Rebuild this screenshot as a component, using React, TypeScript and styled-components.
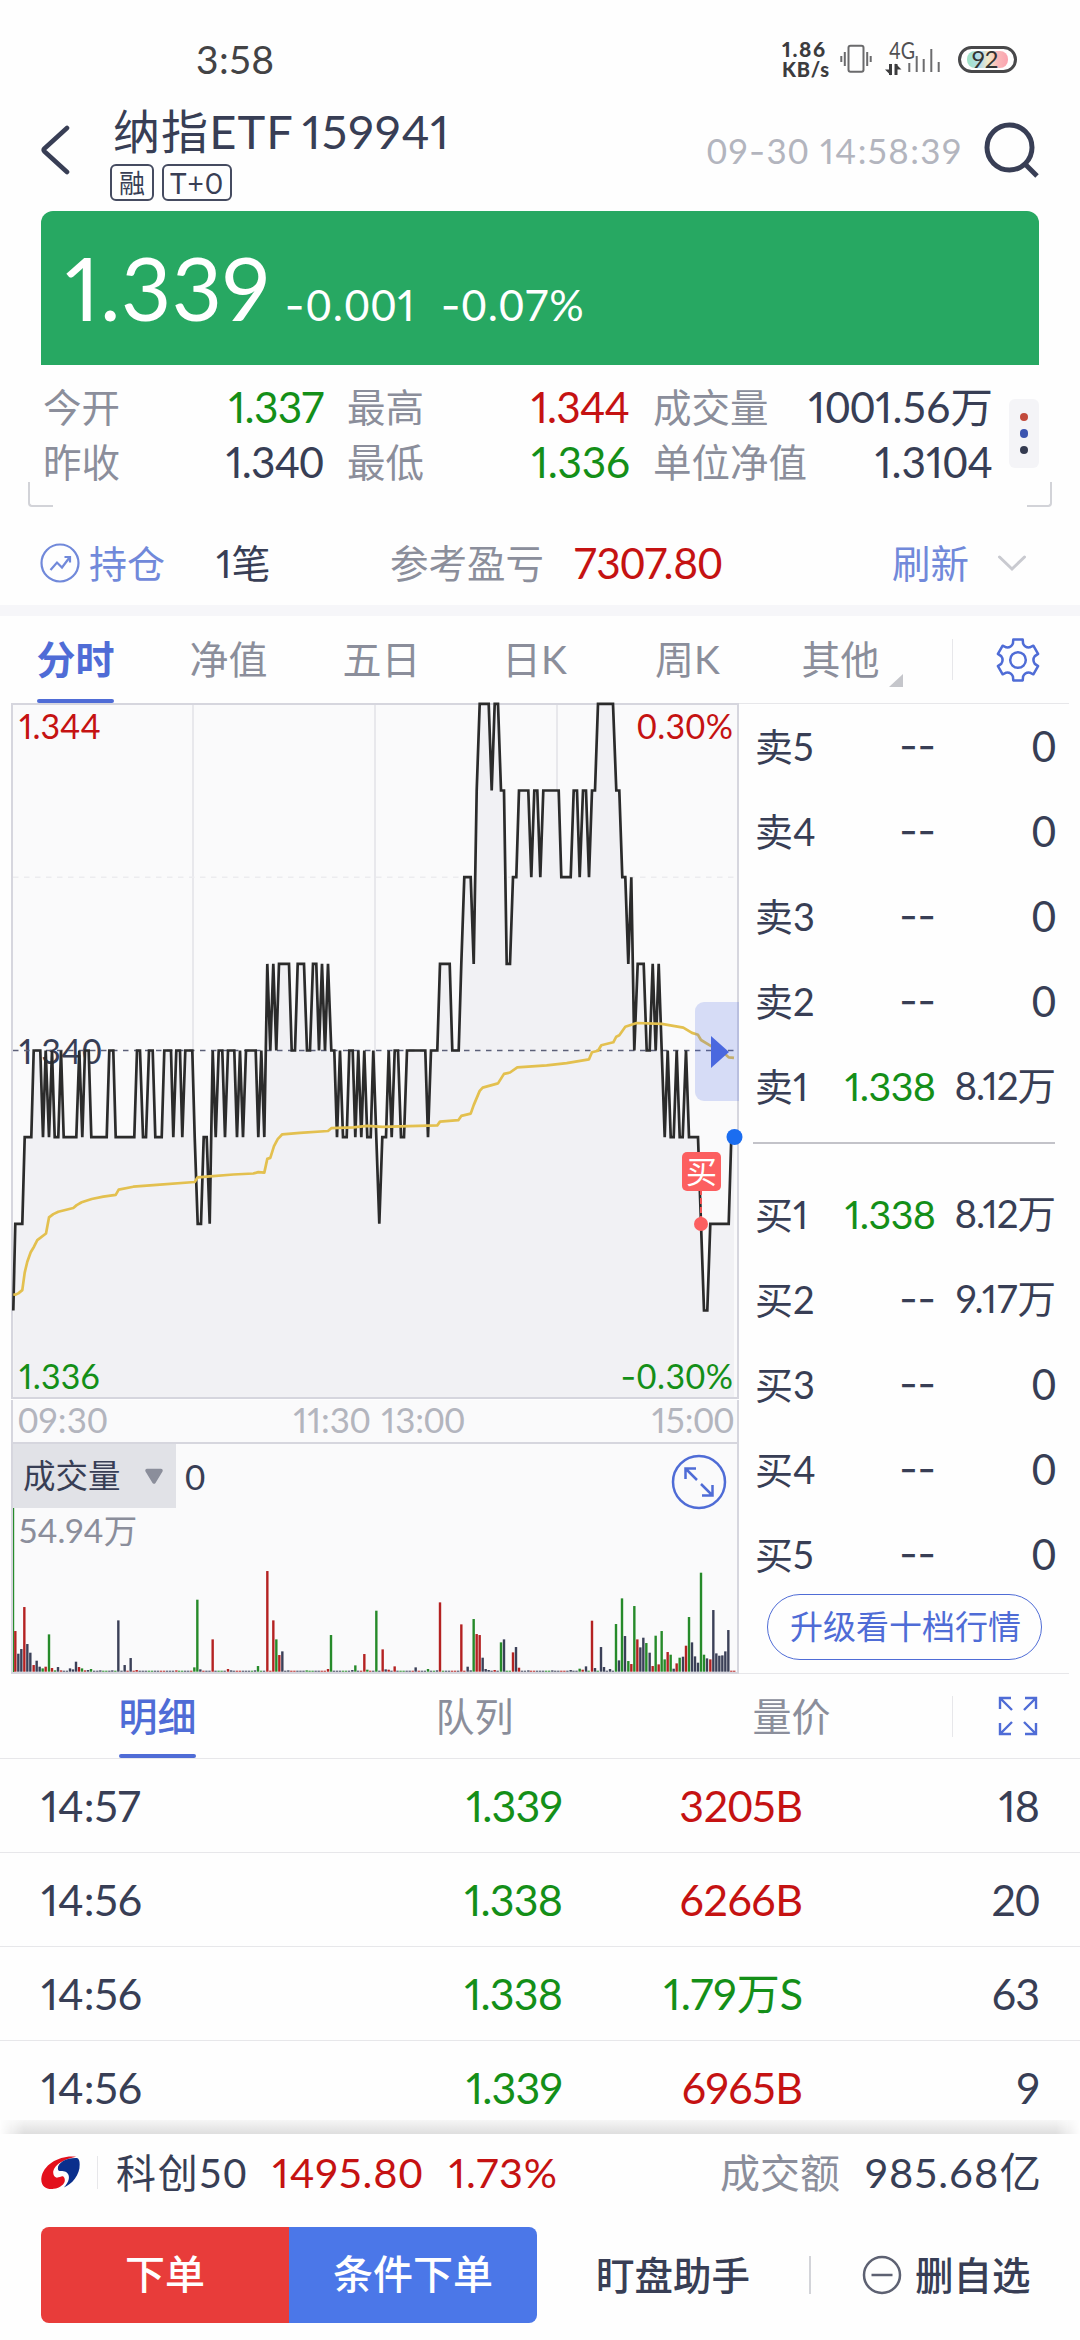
import React from "react";
import styled, { createGlobalStyle, css } from "styled-components";

const c = {
  ink: "#383e55",
  grey: "#8b8e9b",
  pale: "#b3b5be",
  green: "#148f18",
  red: "#c51212",
  blue: "#4f6cd6",
  softBlue: "#7189da",
  line: "#e7e7ea",
  frame: "#d6d6de",
  chartBg: "#fafafb",
};

const Global = createGlobalStyle`
  *, *::before, *::after { box-sizing: border-box; }
  body { margin: 0; background: #fefefe; }
`;

const Screen = styled.main`
  width: 1080px;
  height: 2340px;
  overflow: hidden;
  display: flex;
  flex-direction: column;
  background: #fefefe;
  color: ${c.ink};
  font-family: Lato, "Noto Sans CJK SC", sans-serif;
  font-variant-numeric: proportional-nums;
  line-height: 1;
  white-space: nowrap;
`;

/* ---------- text ---------- */

const Figure = styled.span<{ $size: number; $color?: string; $ls?: number; $weight?: number }>`
  font-size: ${(p) => p.$size}px;
  color: ${(p) => p.$color ?? c.ink};
  letter-spacing: ${(p) => p.$ls ?? 0}px;
  margin-right: ${(p) => -(p.$ls ?? 0)}px;
  font-weight: ${(p) => p.$weight ?? 400};
`;

const Zero = styled.span`
  font-variant-numeric: tabular-nums;
`;

const Minus = styled.span`
  font-family: Inter, sans-serif;
  line-height: 0;
`;

const Dashes = styled.span`
  font-family: Inter, sans-serif;
  font-size: 40px;
`;

type NumProps = { value: string; size: number; color?: string; ls?: number; weight?: number };

/* Proportional figures, with the narrow tabular zero and a wide minus. */
function Num({ value, size, color, ls, weight }: NumProps) {
  return (
    <Figure $size={size} $color={color} $ls={ls} $weight={weight}>
      {value
        .split(/(0+|-)/)
        .filter(Boolean)
        .map((part, i) => {
          if (part === "-") return <Minus key={i}>-</Minus>;
          if (part[0] === "0") return <Zero key={i}>{part}</Zero>;
          return part;
        })}
    </Figure>
  );
}

/* ---------- status bar ---------- */

const StatusBar = styled.header`
  height: 100px;
  padding: 18px 63px 0 196px;
  display: flex;
  align-items: center;
`;

const StatusIcons = styled.div`
  margin-left: auto;
  display: flex;
  align-items: center;
`;

const NetSpeed = styled.div`
  width: 58px;
  display: flex;
  flex-direction: column;
  font-size: 20px;
  line-height: 20px;
  font-weight: 900;
  letter-spacing: 0.8px;
  color: #3c3c3e;
`;

const NetValue = styled.span`
  font-size: 21px;
  letter-spacing: 1.6px;
`;

const Battery = styled.div`
  width: 59px;
  height: 27px;
  border: 3px solid #48484a;
  border-radius: 14px;
  padding: 2px 6px;
  display: flex;
`;

const Charge = styled.div`
  flex: 1;
  display: flex;
  align-items: center;
  justify-content: center;
  border-radius: 8px;
  background: linear-gradient(90deg, #9fe3c4 0%, #b5dcec 30%, #f3e9c6 52%, #f9b9b9 75%, #fba3b0 100%);
  font-size: 24px;
  color: #333;
  text-indent: -5px;
`;

const CellIcon = styled.svg`
  margin: 0 16px 0 13px;
  overflow: visible;
`;

function SignalIcon() {
  return (
    <CellIcon width="57" height="36" viewBox="0 0 57 36">
      <text x="4" y="17.500" fontSize="23" fontFamily="Lato, sans-serif" fill="#505052" textLength="26" lengthAdjust="spacingAndGlyphs">
        4G
      </text>
      <path d="M5.500 23v11M11 23v11" stroke="#3c3c3e" strokeWidth="3" />
      <path d="M6 34.500 0 28.500h6zM10.500 22.500l6 6h-6z" fill="#3c3c3e" />
      <path d="M24.300 22v9M31.700 15v16M38.700 18v13M46.300 8v23M53.700 21v10" stroke="#6c6c6e" strokeWidth="2" />
    </CellIcon>
  );
}

function VibrateIcon() {
  return (
    <svg width="32" height="30" viewBox="0 0 32 30" fill="none" stroke="#6a6a6c" strokeWidth="2">
      <rect x="8.500" y="1.800" width="15" height="26" rx="2" />
      <path d="M4.800 8v14M1.300 12v6M27.200 8v14M30.700 12v6" />
    </svg>
  );
}

/* ---------- title bar ---------- */

const TitleBar = styled.div`
  height: 111px;
  padding: 0 41px;
  display: grid;
  grid-template-columns: 69px 1fr auto 78px;
`;

const TitleSide = styled.div<{ $end?: boolean }>`
  height: 100px;
  display: flex;
  align-items: center;
  justify-content: ${(p) => (p.$end ? "flex-end" : "flex-start")};
`;

const TitleBlock = styled.div`
  padding-top: 8px;
  display: flex;
  flex-direction: column;
  gap: 8px;
`;

const Title = styled.h1`
  margin: 0;
  height: 48px;
  display: flex;
  align-items: center;
  font-size: 47px;
  line-height: 48px;
  font-weight: 400;
  letter-spacing: 1.1px;
  word-spacing: -4px;
  padding: 0 0 2px 3px;
`;

const Tags = styled.div`
  display: flex;
  gap: 8px;
`;

const Tag = styled.span<{ $wide?: boolean }>`
  width: ${(p) => (p.$wide ? 70 : 44)}px;
  height: 37px;
  border: 2px solid #454b60;
  border-radius: 6px;
  display: flex;
  align-items: center;
  justify-content: center;
  font-size: ${(p) => (p.$wide ? 28 : 26)}px;
  letter-spacing: ${(p) => (p.$wide ? 1 : 0)}px;
`;

/* ---------- price banner ---------- */

const Banner = styled.section`
  height: 154px;
  margin: 0 41px;
  padding: 33px 0 0 24px;
  display: flex;
  align-items: baseline;
  background: #27a862;
  border-radius: 12px 12px 0 0;
`;

const Change = styled.div`
  margin-left: 15px;
  display: flex;
  gap: 26px;
`;

/* ---------- statistics ---------- */

const Stats = styled.section`
  position: relative;
  height: 145px;
  padding: 15px 0 0 43px;
  display: flex;
  align-items: flex-start;
`;

const StatGrid = styled.div`
  display: grid;
  grid-template-columns: 281px 283px 340px;
  grid-auto-rows: 55px;
  column-gap: 23px;
`;

const Stat = styled.div`
  display: flex;
  align-items: center;
  justify-content: space-between;
`;

const Label = styled.span<{ $size?: number; $color?: string }>`
  font-size: ${(p) => p.$size ?? 38.5}px;
  color: ${(p) => p.$color ?? c.grey};
`;

const MoreDots = styled.div`
  width: 30px;
  height: 69px;
  margin: 19px 0 0 16px;
  border-radius: 6px;
  background: #f4f4f7;
  display: flex;
  flex-direction: column;
  align-items: center;
  justify-content: center;
  gap: 8px;
`;

const Dot = styled.i<{ $color: string }>`
  width: 8.5px;
  height: 8.5px;
  border-radius: 50%;
  background: ${(p) => p.$color};
`;

const Corner = styled.i<{ $right?: boolean }>`
  position: absolute;
  bottom: 3px;
  ${(p) => (p.$right ? "right: 28px" : "left: 28px")};
  width: 25px;
  height: 25px;
  border-bottom: 2.5px solid #d2d3d8;
  ${(p) =>
    p.$right
      ? css`border-right: 2.5px solid #d2d3d8; border-bottom-right-radius: 4px;`
      : css`border-left: 2.5px solid #d2d3d8; border-bottom-left-radius: 4px;`}
`;

const Position = styled.section`
  height: 95px;
  padding: 11px 0 0 40px;
  display: grid;
  grid-template-columns: 49px 127px 174px 184px 318px auto;
  align-items: center;
`;

const Refresh = styled.div`
  display: flex;
  align-items: center;
  gap: 28px;
`;

const Band = styled.div`
  height: 11px;
  background: #f6f6f9;
`;

/* ---------- tabs ---------- */

const Tabs = styled.nav<{ $col: number; $height: number; $ruled?: boolean }>`
  height: ${(p) => p.$height}px;
  margin-left: -1px;
  display: grid;
  grid-auto-flow: column;
  grid-auto-columns: ${(p) => p.$col}px;
  ${(p) => p.$ruled && css`border-bottom: 1px solid ${c.line};`}
`;

const Tab = styled.button<{ $active?: boolean; $bold?: boolean }>`
  position: relative;
  border: 0;
  padding: 0;
  background: none;
  font: inherit;
  font-size: 39px;
  font-weight: ${(p) => (p.$bold ? 700 : p.$active ? 500 : 400)};
  color: ${(p) => (p.$active ? c.blue : c.grey)};
  ${(p) =>
    p.$active &&
    css`
      &::after {
        content: "";
        position: absolute;
        left: calc(50% - 39px);
        bottom: 0;
        width: 77px;
        height: 4px;
        border-radius: 2px;
        background: ${c.blue};
      }
    `}
`;

const TabFold = styled.i`
  position: absolute;
  right: 14px;
  bottom: 16px;
  border-left: 14px solid transparent;
  border-bottom: 13px solid #c5c6cb;
`;

const TabTool = styled.div<{ $shift: number }>`
  width: 130px;
  height: 41px;
  margin-left: ${(p) => p.$shift}px;
  align-self: center;
  border-left: 1.5px solid ${c.line};
  display: flex;
  align-items: center;
  justify-content: center;
`;

function GearIcon() {
  const pt = (r: number, a: number) => {
    const t = (a * Math.PI) / 180;
    return `${(23 + r * Math.cos(t)).toFixed(2)} ${(23 + r * Math.sin(t)).toFixed(2)}`;
  };
  const d = [0, 1, 2, 3, 4, 5]
    .map((k) => {
      const a = -90 + k * 60;
      return `${k ? "L" : "M"}${pt(21, a - 13)} L${pt(21, a + 13)} L${pt(17.3, a + 17)} Q${pt(14, a + 30)} ${pt(17.3, a + 43)}`;
    })
    .join(" ");
  return (
    <svg width="46" height="46" viewBox="0 0 46 46" fill="none" stroke={c.blue} strokeWidth="2.500" strokeLinejoin="round">
      <path d={d + "Z"} />
      <circle cx="23" cy="23" r="7.800" />
    </svg>
  );
}

/* ---------- market panel ---------- */

const Market = styled.section`
  height: 971px;
  margin: 0 11px;
  display: grid;
  grid-template-columns: 728px 330px;
`;

const ChartColumn = styled.div`
  display: flex;
  flex-direction: column;
`;

const PriceChart = styled.div`
  position: relative;
  height: 696px;
  border: 2px solid ${c.frame};
  background: ${c.chartBg};
`;

const ChartSvg = styled.svg`
  position: absolute;
  left: -2px;
  top: -2px;
  overflow: visible;
`;

const AxisLabel = styled.div<{ $top: number; $right?: boolean }>`
  position: absolute;
  top: ${(p) => p.$top}px;
  ${(p) => (p.$right ? "right: 4px" : "left: 6px")};
`;

const BuyBadge = styled.div`
  position: absolute;
  left: 669px;
  top: 447px;
  width: 39px;
  height: 39px;
  border-radius: 5px;
  background: #fc5f60;
  color: #fff;
  font-size: 31px;
  display: flex;
  align-items: center;
  justify-content: center;
`;

const Drawer = styled.button`
  position: absolute;
  right: -2px;
  top: 297px;
  width: 44px;
  height: 99px;
  border: 0;
  border-radius: 9px 0 0 9px;
  padding: 0 0 0 16px;
  background: rgba(79, 108, 226, 0.21);
  display: flex;
  align-items: center;
`;

const TimeAxis = styled.div`
  height: 42px;
  margin-top: 1px;
  padding: 0 3px 3px 5px;
  border: solid ${c.frame};
  border-width: 0 2px;
  background: ${c.chartBg};
  display: grid;
  grid-template-columns: 1fr auto 1fr;
  align-items: center;
`;

const Noon = styled.div`
  display: flex;
  gap: 11px;
  padding-left: 6px;
`;

const AxisEnd = styled.div`
  text-align: right;
`;

const VolumeChart = styled.div`
  position: relative;
  height: 232px;
  border: 2px solid ${c.frame};
  background: ${c.chartBg};
`;

const VolumeHead = styled.div`
  display: flex;
  align-items: center;
  gap: 9px;
`;

const IndicatorPicker = styled.button`
  width: 163px;
  height: 64px;
  border: 0;
  padding: 0 12px 0 10px;
  background: #e1e2e7;
  display: flex;
  align-items: center;
  justify-content: space-between;
  font: inherit;
  font-size: 32.5px;
  color: ${c.ink};
`;

const VolumeMax = styled.div`
  padding: 6px 0 0 6px;
`;

const ZoomButton = styled.div`
  position: absolute;
  right: 10px;
  top: 10px;
  width: 56px;
  height: 56px;
`;

/* ---------- order book ---------- */

const OrderBook = styled.div`
  border: solid ${c.line};
  border-width: 1.5px 0;
  padding: 0 16px;
`;

const Quote = styled.div<{ $bid?: boolean }>`
  height: 85px;
  padding-bottom: ${(p) => (p.$bid ? 4 : 2)}px;
  display: grid;
  grid-template-columns: 87px 94px 120px;
  align-items: center;
`;

const QuoteCell = styled.div`
  text-align: right;
`;

const Spread = styled.div`
  height: 44px;
  padding-top: 13px;
  &::before {
    content: "";
    display: block;
    margin: 0 -2px;
    border-top: 2px solid #c3c3c9;
  }
`;

const Upgrade = styled.button`
  width: 275px;
  height: 66px;
  margin: -4px 0 0 12px;
  border: 1.5px solid ${c.blue};
  border-radius: 33px;
  padding: 0 0 2px 2px;
  background: none;
  font: inherit;
  font-size: 33px;
  color: ${c.blue};
`;

/* ---------- trades ---------- */

const Trade = styled.div`
  height: 94px;
  padding: 0 0 1px 41px;
  border-bottom: 1.5px solid ${c.line};
  display: grid;
  grid-template-columns: 281px 241px 240px 237px;
  align-items: center;
`;

/* ---------- bottom bar ---------- */

const BottomBar = styled.footer`
  position: relative;
  height: 206px;
  margin-top: -1px;
  background: #fefefe;
  &::before {
    content: "";
    position: absolute;
    left: 0;
    right: 0;
    top: -14px;
    height: 14px;
    background: linear-gradient(#f6f6f6, #dedede);
    mask-image: linear-gradient(90deg, transparent 0, #000 24px, #000 1056px, transparent 1080px);
  }
`;

const Ticker = styled.div`
  height: 78px;
  padding: 0 39px 1px 41px;
  display: flex;
  align-items: center;
`;

const Rule = styled.i<{ $h: number; $color?: string; $w?: number }>`
  width: ${(p) => p.$w ?? 1}px;
  height: ${(p) => p.$h}px;
  background: ${(p) => p.$color ?? c.line};
`;

const TickerRule = styled.div`
  margin-left: 17px;
  display: flex;
`;

const IndexInfo = styled.div`
  margin-left: 18px;
  display: flex;
  align-items: center;
  gap: 26px;
`;

const Turnover = styled.div`
  margin-left: auto;
  display: flex;
  align-items: center;
  gap: 25px;
`;

const Actions = styled.div`
  padding: 15px 0 0 41px;
  display: flex;
  align-items: center;
`;

const TradeButton = styled.button<{ $blue?: boolean }>`
  width: 248px;
  height: 96px;
  border: 0;
  border-radius: ${(p) => (p.$blue ? "0 8px 8px 0" : "8px 0 0 8px")};
  padding: 0 0 2px;
  background: ${(p) => (p.$blue ? "#4b77e8" : "#e83c3a")};
  color: #fff;
  font: inherit;
  font-size: 40px;
  font-weight: 500;
`;

const TextAction = styled.button`
  border: 0;
  padding: 0;
  background: none;
  display: flex;
  align-items: center;
  gap: 13px;
  font: inherit;
  font-size: 38.5px;
  font-weight: 500;
  color: ${c.ink};
`;

const Helper = styled.div`
  margin-left: 59px;
`;

const Split = styled.div`
  margin: 0 51px 0 59px;
  display: flex;
`;

/* ---------- chart data ---------- */

/* Horizontal positions are in thirds of a pixel; levels are ticks from 1.340. */
const price: [number, number][] = [
  [40, -3], [46, -2], [67, -2], [74, -1], [94, -1], [101, 0], [121, 0], [129, -1], [137, 0], [147, -1], [156, 0],
  [164, -1], [175, -1], [183, 0], [191, -1], [229, -1], [238, 0], [247, -1], [255, 0], [266, 0], [274, -1], [320, -1],
  [328, 0], [340, 0], [347, -1], [403, -1], [411, 0], [420, 0], [429, -1], [438, -1], [447, 0], [458, 0], [466, -1],
  [485, -1], [493, 0], [513, 0], [520, -1], [529, 0], [540, 0], [547, -1], [556, 0], [577, 0], [584, -1], [593, -2],
  [603, -2], [611, -1], [620, -1], [629, -2], [638, 0], [647, -1], [656, 0], [667, 0], [675, -1], [684, 0], [703, 0],
  [711, -1], [720, 0], [729, -1], [738, 0], [767, 0], [775, -1], [784, 0], [793, -1], [802, 1], [811, 0], [820, 1],
  [829, 0], [837, 1], [867, 1], [875, 0], [885, 0], [893, 1], [912, 1], [921, 0], [930, 0], [939, 1], [949, 1],
  [957, 0], [966, 1], [975, 0], [984, 1], [994, 0], [1003, 0], [1011, -1], [1020, 0], [1029, -1], [1040, -1],
  [1048, 0], [1058, 0], [1066, -1], [1075, 0], [1084, -1], [1093, 0], [1102, -1], [1112, -1], [1120, 0], [1129, -1],
  [1138, -2], [1147, -1], [1158, -1], [1166, 0], [1175, -1], [1184, 0], [1194, 0], [1203, -1], [1212, -1], [1221, 0],
  [1276, 0], [1284, -1], [1293, 0], [1312, 0], [1320, 1], [1349, 1], [1357, 0], [1376, 0], [1384, 1], [1393, 2],
  [1412, 2], [1421, 1], [1430, 3], [1439, 4], [1466, 4], [1475, 3], [1484, 4], [1494, 4], [1503, 3], [1512, 3],
  [1520, 1], [1530, 1], [1539, 2], [1549, 2], [1557, 3], [1585, 3], [1594, 2], [1603, 3], [1612, 3], [1621, 2],
  [1630, 3], [1676, 3], [1684, 2], [1712, 2], [1721, 3], [1731, 3], [1739, 2], [1749, 3], [1758, 3], [1767, 2],
  [1776, 3], [1785, 3], [1794, 4], [1839, 4], [1849, 3], [1858, 3], [1867, 2], [1876, 2], [1885, 1], [1894, 2],
  [1903, 0], [1913, 1], [1931, 1], [1940, 0], [1949, 0], [1958, 1], [1967, 0], [1976, 1], [1985, 0], [1994, -1],
  [2003, 0], [2012, -1], [2021, -1], [2030, 0], [2039, -1], [2048, -1], [2058, 0], [2067, -1], [2094, -1],
  [2103, -2], [2112, -3], [2122, -3], [2131, -2], [2186, -2], [2194, -1], [2202, -1],
];

const average: [number, number][] = [
  [40, 1281], [46, 1282], [55, 1279], [67, 1272], [74, 1235], [82, 1212], [92, 1192], [102, 1180], [112, 1166],
  [138, 1152], [147, 1118], [160, 1111], [175, 1106], [220, 1098], [230, 1092], [245, 1086], [275, 1079], [310, 1074],
  [347, 1070], [356, 1059], [400, 1053], [470, 1049], [584, 1043], [593, 1033], [630, 1031], [700, 1027], [760, 1025],
  [775, 1022], [793, 1023], [802, 994], [811, 992], [822, 967], [833, 952], [847, 942], [900, 939], [984, 935],
  [994, 929], [1060, 927], [1102, 924], [1147, 926], [1200, 925], [1312, 923], [1320, 915], [1375, 912], [1384, 903],
  [1412, 898], [1421, 880], [1439, 850], [1448, 843], [1494, 834], [1512, 814], [1530, 811], [1552, 800], [1640, 796],
  [1700, 791], [1767, 783], [1776, 768], [1794, 765], [1804, 753], [1840, 747], [1849, 735], [1858, 732], [1876, 714],
  [1910, 706], [1985, 708], [2050, 716], [2076, 727], [2094, 731], [2103, 742], [2131, 754], [2150, 762], [2170, 768],
  [2186, 779], [2202, 780],
];

const volume = `46r122 55d54 64d68 73r194 82d83 91d57 101r20 110d33 119d15 128g10 137r15 147g112 156r11 165g4 174d14
183r4 210d10 219d7 228d30 237r14 246g10 255r4 264d5 273g8 292d3 301d4 337d4 346g3 355d154 374d20 392d41 410r5 529r4
583g13 592g216 601d7 638r97 684r8 693d4 765d4 774g17 802r302 811r3 820r154 829g97 838r50 847d61 865d4 920g4 984r8
993g110 1057d5 1066g19 1093r53 1102g6 1129g183 1138d3 1148r67 1157d7 1166r6 1184r16 1247d13 1284g8 1311d4 1320r208
1384r142 1393r3 1403d15 1412d4 1421g158 1430r113 1439r110 1448d42 1457d8 1466d5 1484r5 1503g88 1512d97 1539r58
1548d74 1557r12 1585d4 1657d4 1712d5 1739g9 1748r6 1758d16 1776r153 1785d11 1803d74 1812d14 1830d8 1848g143 1857d34
1866g220 1875d107 1885g32 1894r23 1903g197 1912r97 1921d73 1930d102 1939g86 1949d57 1958r17 1967g108 1976r22
1985g122 1994g37 2003r59 2012g51 2021d9 2030r25 2039g42 2049d45 2058r78 2067g164 2076d88 2085d46 2094d27 2103g297
2112g51 2121d40 2131r37 2140d185 2149d55 2158d48 2167d49 2176d61 2185d125 2194r3`
  .split(/\s+/)
  .map((s) => {
    const m = /(\d+)([rgd])(\d+)/.exec(s)!;
    return { x: +m[1], tone: m[2], h: +m[3] };
  });

const tones: Record<string, string> = { r: "#b42222", g: "#268a2a", d: "#3b4058" };

/* Minutes with almost no turnover still show a sliver on the baseline. */
const quiet = Array.from({ length: 238 }, (_, i) => 46 + i * 9.1)
  .filter((x) => !volume.some((v) => Math.abs(v.x - x) < 5))
  .map((x, i) => ({ x, tone: "ddgdrdgdr"[(i * 5) % 9], h: 3 }));

const gx = (x: number) => x / 3 - 11;
const level = (n: number) => 347.5 - n * 86.65;
const pricePoints = price.map(([x, n]) => `${gx(x).toFixed(1)},${level(n).toFixed(1)}`).join(" ");
const averagePoints = average.map(([x, y]) => `${gx(x).toFixed(1)},${(y / 2.119 - 13.2).toFixed(1)}`).join(" ");

function PriceLines() {
  return (
    <ChartSvg width="728" height="696" viewBox="0 0 728 696" fill="none">
      <path d="M182 2V694M364 2V694M546 2V694" stroke="#e6e6ea" strokeWidth="1.800" />
      <path d="M2 174.300H724" stroke="#ececef" strokeWidth="1.500" strokeDasharray="5.500 5.500" />
      <polygon points={`2.300,694 ${pricePoints} 723,694`} fill="#f1f1f4" />
      <path d="M2 347.500H724" stroke="#5c6078" strokeWidth="1.500" strokeDasharray="5.500 5.500" />
      <polyline points={pricePoints} stroke="#2b2b2b" strokeWidth="2.700" />
      <polyline points={averagePoints} stroke="#e3c04f" strokeWidth="2.700" strokeLinejoin="round" />
      <path d="M690 486V521" stroke="#e55" strokeWidth="2" strokeDasharray="6 3" />
      <circle cx="690" cy="521" r="7" fill="#fc5f60" />
      <circle cx="723.500" cy="434" r="8" fill="#1b6df0" />
    </ChartSvg>
  );
}

function VolumeBars() {
  return (
    <ChartSvg width="728" height="232" viewBox="0 0 728 232">
      <rect x="2" y="66" width="1.200" height="164" fill="#268a2a" />
      {[...quiet, ...volume].map((v) => (
        <rect key={v.x} x={gx(v.x) - 1.2} y={229.7 - v.h / 3} width="2.400" height={v.h / 3} fill={tones[v.tone]} />
      ))}
    </ChartSvg>
  );
}

/* ---------- content ---------- */

const stats = [
  { label: "今开", value: "1.337", color: c.green, ls: -0.7 },
  { label: "最高", value: "1.344", color: c.red, ls: -0.8 },
  { label: "成交量", value: "1001.56万", color: c.ink, ls: 0.3 },
  { label: "昨收", value: "1.340", color: c.ink, ls: -0.8 },
  { label: "最低", value: "1.336", color: c.green, ls: -0.3 },
  { label: "单位净值", value: "1.3104", color: c.ink, ls: 0 },
];

const asks = [
  ["卖5", "", "0"],
  ["卖4", "", "0"],
  ["卖3", "", "0"],
  ["卖2", "", "0"],
  ["卖1", "1.338", "8.12万"],
];

const bids = [
  ["买1", "1.338", "8.12万"],
  ["买2", "", "9.17万"],
  ["买3", "", "0"],
  ["买4", "", "0"],
  ["买5", "", "0"],
];

const trades = [
  { time: "14:57", price: "1.339", vol: "3205B", buy: true, count: "18" },
  { time: "14:56", price: "1.338", vol: "6266B", buy: true, count: "20" },
  { time: "14:56", price: "1.338", vol: "1.79万S", buy: false, count: "63" },
  { time: "14:56", price: "1.339", vol: "6965B", buy: true, count: "9" },
];

function QuoteRow({ row: [name, quote, amount], bid }: { row: string[]; bid?: boolean }) {
  return (
    <Quote $bid={bid}>
      <Label $size={38} $color={c.ink}>
        {name}
      </Label>
      <QuoteCell>{quote ? <Num value={quote} size={39.5} color={c.green} ls={-0.6} /> : <Dashes>--</Dashes>}</QuoteCell>
      <QuoteCell>
        <Num value={amount} size={amount === "0" ? 42 : 38.5} ls={amount === "0" ? 0 : amount[0] === "9" ? 0 : -1} />
      </QuoteCell>
    </Quote>
  );
}

export default function App() {
  return (
    <Screen>
      <Global />
      <StatusBar>
        <Num value="3:58" size={39} color="#434345" ls={0.6} />
        <StatusIcons>
          <NetSpeed>
            <NetValue>1.86</NetValue>
            <span>KB/s</span>
          </NetSpeed>
          <VibrateIcon />
          <SignalIcon />
          <Battery>
            <Charge>92</Charge>
          </Battery>
        </StatusIcons>
      </StatusBar>

      <TitleBar>
        <TitleSide>
          <svg width="30" height="50" viewBox="0 0 30 50" fill="none" stroke={c.ink} strokeWidth="4.600" strokeLinecap="round" strokeLinejoin="round">
            <path d="M26 3 3.500 23.500Q2 25 3.500 26.500L26 47" />
          </svg>
        </TitleSide>
        <TitleBlock>
          <Title>纳指ETF 159941</Title>
          <Tags>
            <Tag>融</Tag>
            <Tag $wide>T+0</Tag>
          </Tags>
        </TitleBlock>
        <TitleSide>
          <Num value="09-30 14:58:39" size={35} color={c.pale} ls={1.4} />
        </TitleSide>
        <TitleSide $end>
          <svg width="56" height="56" viewBox="0 0 56 56" fill="none" stroke={c.ink} strokeWidth="5">
            <circle cx="26.500" cy="25.500" r="22.500" />
            <path d="M42 42 54 54" />
          </svg>
        </TitleSide>
      </TitleBar>

      <Banner>
        <Num value="1.339" size={87} color="#fff" ls={0.5} />
        <Change>
          <Num value="-0.001" size={43} color="#fff" ls={1.6} />
          <Num value="-0.07%" size={43} color="#fff" ls={1.2} />
        </Change>
      </Banner>

      <Stats>
        <StatGrid>
          {stats.map((s) => (
            <Stat key={s.label}>
              <Label>{s.label}</Label>
              <Num value={s.value} size={42.5} color={s.color} ls={s.ls} />
            </Stat>
          ))}
        </StatGrid>
        <MoreDots>
          <Dot $color="#c24a3c" />
          <Dot $color="#3c55b0" />
          <Dot $color="#343a50" />
        </MoreDots>
        <Corner />
        <Corner $right />
      </Stats>

      <Position>
        <svg width="40" height="40" viewBox="0 0 40 40" fill="none" stroke={c.softBlue} strokeWidth="2.200">
          <circle cx="20" cy="20" r="18.500" />
          <path d="M10.500 27 17 19.500 22 24.500 29.500 14.500M24.500 14h5.500v5.500" />
        </svg>
        <Label $size={38} $color={c.softBlue}>
          持仓
        </Label>
        <Label $size={39} $color={c.ink}>
          1笔
        </Label>
        <Label>参考盈亏</Label>
        <Num value="7307.80" size={42.5} color={c.red} ls={-0.4} />
        <Refresh>
          <Label $color={c.softBlue}>刷新</Label>
          <svg width="30" height="18" viewBox="0 0 30 18" fill="none" stroke="#c9cad0" strokeWidth="3" strokeLinecap="round">
            <path d="M2.500 3 15 15 27.500 3" />
          </svg>
        </Refresh>
      </Position>
      <Band />

      <Tabs $col={153} $height={87}>
        <Tab $active $bold>
          分时
        </Tab>
        <Tab>净值</Tab>
        <Tab>五日</Tab>
        <Tab>日K</Tab>
        <Tab>周K</Tab>
        <Tab>
          其他
          <TabFold />
        </Tab>
        <TabTool $shift={35}>
          <GearIcon />
        </TabTool>
      </Tabs>

      <Market>
        <ChartColumn>
          <PriceChart>
            <AxisLabel $top={329}>
              <Num value="1.340" size={34} ls={0.4} />
            </AxisLabel>
            <PriceLines />
            <AxisLabel $top={4}>
              <Num value="1.344" size={34} color={c.red} />
            </AxisLabel>
            <AxisLabel $top={4} $right>
              <Num value="0.30%" size={34} color={c.red} ls={0.4} />
            </AxisLabel>
            <AxisLabel $top={654}>
              <Num value="1.336" size={34} color={c.green} ls={0.2} />
            </AxisLabel>
            <AxisLabel $top={654} $right>
              <Num value="-0.30%" size={34} color={c.green} ls={0.5} />
            </AxisLabel>
            <BuyBadge>买</BuyBadge>
            <Drawer>
              <svg width="18" height="32" viewBox="0 0 18 32">
                <path d="M0 0 18 16 0 32Z" fill="#4a68df" />
              </svg>
            </Drawer>
          </PriceChart>
          <TimeAxis>
            <Num value="09:30" size={35} color={c.pale} ls={0.2} />
            <Noon>
              <Num value="11:30" size={35} color={c.pale} />
              <Num value="13:00" size={35} color={c.pale} />
            </Noon>
            <AxisEnd>
              <Num value="15:00" size={35} color={c.pale} />
            </AxisEnd>
          </TimeAxis>
          <VolumeChart>
            <VolumeBars />
            <VolumeHead>
              <IndicatorPicker>
                成交量
                <svg width="20" height="17" viewBox="0 0 20 17">
                  <path d="M3 2.500H17L10 14Z" fill={c.grey} stroke={c.grey} strokeWidth="3.500" strokeLinejoin="round" />
                </svg>
              </IndicatorPicker>
              <Num value="0" size={35} />
            </VolumeHead>
            <VolumeMax>
              <Num value="54.94万" size={33.5} color={c.grey} ls={0.2} />
            </VolumeMax>
            <ZoomButton>
              <svg width="56" height="56" viewBox="0 0 56 56" fill="none" stroke={c.blue} strokeWidth="2.500">
                <circle cx="28" cy="28" r="26" />
                <path d="M26 26 14.500 14.500M14.500 25V14.500H25M30 30 41.500 41.500M31 41.500H41.500V31" />
              </svg>
            </ZoomButton>
          </VolumeChart>
        </ChartColumn>

        <OrderBook>
          {asks.map((r) => (
            <QuoteRow key={r[0]} row={r} />
          ))}
          <Spread />
          {bids.map((r) => (
            <QuoteRow key={r[0]} row={r} bid />
          ))}
          <Upgrade>升级看十档行情</Upgrade>
        </OrderBook>
      </Market>

      <Tabs $col={317} $height={85} $ruled>
        <Tab $active>明细</Tab>
        <Tab>队列</Tab>
        <Tab>量价</Tab>
        <TabTool $shift={2}>
          <svg width="40" height="40" viewBox="0 0 40 40" fill="none" stroke={c.blue} strokeWidth="2.400">
            <path d="M2 13V2H13M2 2 14 14M27 2H38V13M38 2 26 14M2 27V38H13M2 38 14 26M27 38H38V27M38 38 26 26" />
          </svg>
        </TabTool>
      </Tabs>

      {trades.map((t, i) => (
        <Trade key={i}>
          <Num value={t.time} size={43} />
          <QuoteCell>
            <Num value={t.price} size={43} color={c.green} ls={-0.8} />
          </QuoteCell>
          <QuoteCell>
            <Num value={t.vol} size={43} color={t.buy ? c.red : c.green} ls={t.buy ? -0.4 : 0} />
          </QuoteCell>
          <QuoteCell>
            <Num value={t.count} size={43} ls={-0.8} />
          </QuoteCell>
        </Trade>
      ))}

      <BottomBar>
        <Ticker>
          <svg width="39" height="35" viewBox="32 91 118 103">
            <path d="M138 95C95 88 38 115 33 160C31 185 50 195 70 192C95 188 110 172 102 158C97 149 90 159 78 158C60 150 64 110 138 95Z" fill="#e3101c" />
            <path d="M141 99C112 97 82 112 83 131C84 143 98 135 108 141C123 151 117 172 101 188C125 178 150 150 149 118C149 108 147 101 141 99Z" fill="#0b2f8c" />
          </svg>
          <TickerRule>
            <Rule $h={33} />
          </TickerRule>
          <IndexInfo>
            <Num value="科创50" size={40} ls={1.8} />
            <Num value="1495.80" size={41.5} color={c.red} ls={1} />
            <Num value="1.73%" size={41.5} color={c.red} ls={0.8} />
          </IndexInfo>
          <Turnover>
            <Label $size={40}>成交额</Label>
            <Num value="985.68亿" size={41.5} ls={1.2} />
          </Turnover>
        </Ticker>
        <Actions>
          <TradeButton>下单</TradeButton>
          <TradeButton $blue>条件下单</TradeButton>
          <Helper>
            <TextAction>盯盘助手</TextAction>
          </Helper>
          <Split>
            <Rule $h={38} $w={2} $color="#d3d4d9" />
          </Split>
          <TextAction>
            <svg width="40" height="40" viewBox="0 0 40 40" fill="none" stroke="#5d6172" strokeWidth="2.500">
              <circle cx="20" cy="20" r="18" />
              <path d="M9.500 20H30.500" />
            </svg>
            删自选
          </TextAction>
        </Actions>
      </BottomBar>
    </Screen>
  );
}
